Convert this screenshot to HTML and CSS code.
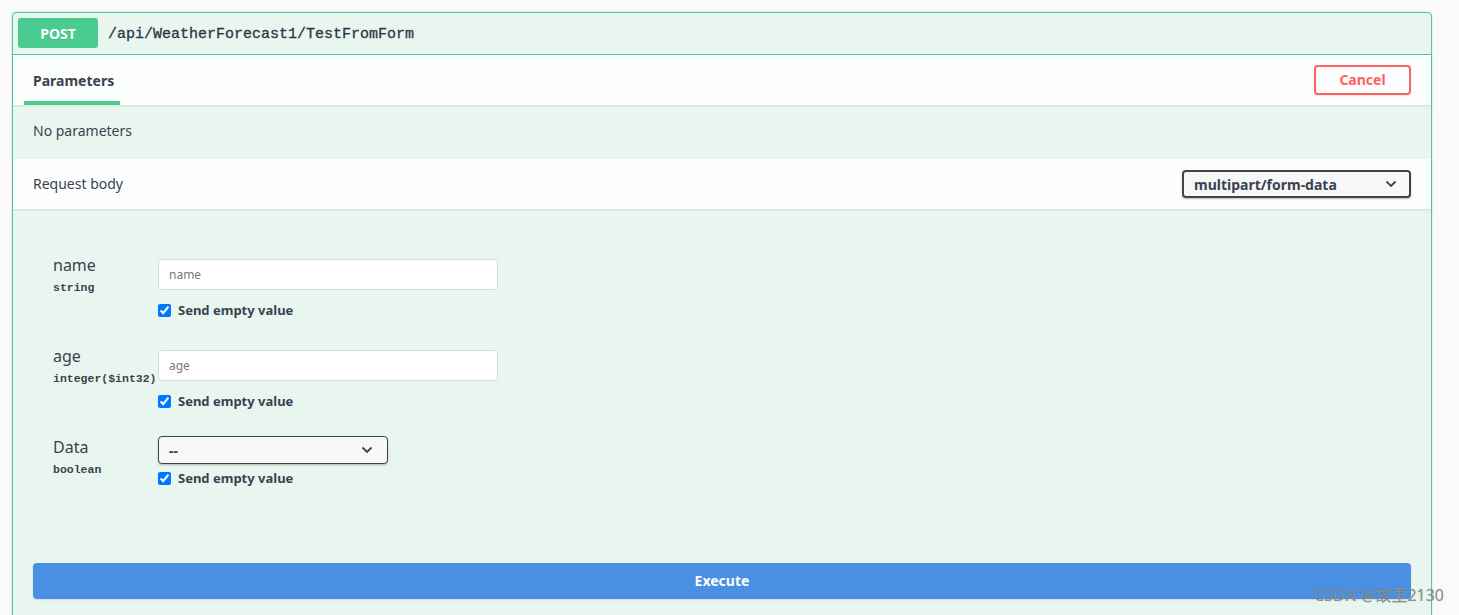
FILE: index.html
```html
<!DOCTYPE html>
<html lang="en">
<head>
<meta charset="utf-8">
<title>POST /api/WeatherForecast1/TestFromForm</title>
<link rel="stylesheet" href="styles.css">
</head>
<body>
<div class="opblock">
  <div class="summary">
    <span class="method">POST</span>
    <span class="path">/api/WeatherForecast1/TestFromForm</span>
  </div>
  <div class="tab-header">
    <div class="tab-item"><h4 class="tab-title">Parameters</h4></div>
    <button class="btn-cancel">Cancel</button>
  </div>
  <div class="no-params">No parameters</div>
  <div class="section-header">
    <span class="section-title">Request body</span>
    <div class="ctype-select">
      <span>multipart/form-data</span>
      <svg class="chev" width="12" height="8" viewBox="0 0 12 8"><polyline points="1.5,1.5 6,6 10.5,1.5" fill="none" stroke="#3b4151" stroke-width="1.8"/></svg>
    </div>
  </div>
  <div class="params">
    <div class="param-row">
      <div class="param-name">
        <div class="pname">name</div>
        <div class="ptype">string</div>
      </div>
      <div class="param-ctrl">
        <div class="text-input">name</div>
        <label class="empty-check"><input type="checkbox" checked>Send empty value</label>
      </div>
    </div>
    <div class="param-row">
      <div class="param-name">
        <div class="pname">age</div>
        <div class="ptype">integer($int32)</div>
      </div>
      <div class="param-ctrl">
        <div class="text-input">age</div>
        <label class="empty-check"><input type="checkbox" checked>Send empty value</label>
      </div>
    </div>
    <div class="param-row">
      <div class="param-name">
        <div class="pname">Data</div>
        <div class="ptype">boolean</div>
      </div>
      <div class="param-ctrl">
        <div class="bool-select">
          <span>--</span>
          <svg class="chev" width="12" height="8" viewBox="0 0 12 8"><polyline points="1.5,1.5 6,6 10.5,1.5" fill="none" stroke="#3b4151" stroke-width="1.8"/></svg>
        </div>
        <label class="empty-check tight"><input type="checkbox" checked>Send empty value</label>
      </div>
    </div>
  </div>
  <div class="execute-wrap">
    <button class="btn-execute">Execute</button>
  </div>
</div>
<div class="watermark">CSDN @故里2130</div>
</body>
</html>
```

FILE: styles.css
```css
html, body {
  margin: 0;
  height: 100%;
}
body {
  background: #fafafa;
  padding: 12px 0 0 12px;
  box-sizing: border-box;
  overflow: hidden;
  font-family: "Noto Sans", "Noto Sans CJK SC", sans-serif;
  color: #3b4151;
}
.opblock {
  width: 1420px;
  height: 640px;
  box-sizing: border-box;
  border: 1px solid #49cc90;
  border-radius: 4px;
  background: #e8f6ef;
  box-shadow: 0 0 3px rgba(0,0,0,.12);
}
.summary {
  display: flex;
  align-items: center;
  padding: 5px 5px 6px;
  border-bottom: 1px solid #49cc90;
}
.method {
  width: 80px;
  height: 30px;
  border-radius: 3px;
  background: #49cc90;
  color: #fff;
  font-weight: 700;
  font-size: 14px;
  display: flex;
  align-items: center;
  justify-content: center;
  text-shadow: 0 1px 0 rgba(0,0,0,.1);
}
.path {
  margin-left: 10px;
  margin-top: 2px;
  font-family: "Liberation Mono", monospace;
  font-size: 15px;
  color: #2f3547;
  -webkit-text-stroke: 0.3px #2f3547;
}
.tab-header {
  height: 50px;
  box-sizing: border-box;
  display: flex;
  align-items: center;
  justify-content: space-between;
  padding: 0 20px;
  background: rgba(255,255,255,.85);
  box-shadow: 0 1px 2px rgba(0,0,0,.1);
}
.tab-item {
  position: relative;
  height: 50px;
  display: flex;
  align-items: center;
}
.tab-title {
  margin: 0;
  font-size: 14px;
  font-weight: 700;
  position: relative;
}
.tab-item::after {
  content: "";
  position: absolute;
  left: -9px;
  right: -6px;
  bottom: 0;
  height: 4px;
  background: #49cc90;
}
.btn-cancel {
  width: 97px;
  height: 30px;
  border: 2px solid #ff6060;
  border-radius: 4px;
  background: transparent;
  color: #ff6060;
  font-family: inherit;
  font-size: 14px;
  font-weight: 700;
  box-shadow: 0 1px 2px rgba(0,0,0,.1);
  padding: 0 0 2px;
}
.no-params {
  height: 54px;
  box-sizing: border-box;
  display: flex;
  align-items: center;
  padding: 0 20px 4px;
  font-size: 14px;
}
.section-header {
  height: 50px;
  box-sizing: border-box;
  display: flex;
  align-items: center;
  justify-content: space-between;
  padding: 0 20px;
  background: rgba(255,255,255,.85);
  box-shadow: 0 1px 2px rgba(0,0,0,.1);
}
.section-title {
  font-size: 14px;
  margin-top: -1px;
}
.ctype-select {
  width: 229px;
  height: 28px;
  box-sizing: border-box;
  border: 2px solid #41444e;
  border-radius: 4px;
  background: #f7f7f7;
  display: flex;
  align-items: center;
  justify-content: space-between;
  padding: 0 12px 0 10px;
  font-size: 14px;
  font-weight: 700;
  box-shadow: 0 1px 2px rgba(0,0,0,.25);
}
.params {
  padding: 45px 20px 0 40px;
  display: flex;
  flex-direction: column;
  gap: 25px;
}
.param-row {
  display: flex;
}
.param-name {
  width: 105px;
  flex: none;
}
.pname {
  font-size: 16px;
  line-height: 22px;
  margin-top: 0;
}
.ptype {
  font-family: "Liberation Mono", monospace;
  font-size: 11.5px;
  font-weight: 700;
  margin-top: 5px;
}
.param-ctrl {
  display: flex;
  flex-direction: column;
}
.text-input {
  width: 340px;
  height: 31px;
  box-sizing: border-box;
  margin-top: 5px;
  border: 1px solid #d9d9d9;
  border-radius: 4px;
  background: #fff;
  padding: 0 10px 1px;
  display: flex;
  align-items: center;
  font-size: 12px;
  color: #7a7a7a;
}
.empty-check {
  margin-top: 10px;
  height: 20px;
  display: flex;
  align-items: center;
  font-size: 13px;
  font-weight: 700;
  white-space: pre;
}
.empty-check.tight {
  margin-top: 4px;
}
.empty-check input {
  margin: 0 7px 0 0;
  width: 13px;
  height: 13px;
  accent-color: #0075ff;
}
.bool-select {
  width: 230px;
  height: 28px;
  box-sizing: border-box;
  border: 1px solid #41444e;
  border-radius: 4px;
  background: #f7f7f7;
  display: flex;
  align-items: center;
  justify-content: space-between;
  padding: 0 14px 0 10px;
  font-size: 14px;
  font-weight: 700;
  box-shadow: 0 1px 2px rgba(0,0,0,.25);
}
.execute-wrap {
  padding: 75px 20px 0 20px;
}
.btn-execute {
  width: 100%;
  height: 36px;
  border: none;
  border-radius: 4px;
  background: #4990e2;
  color: #fff;
  font-family: inherit;
  font-size: 14px;
  font-weight: 700;
  box-shadow: 0 1px 2px rgba(0,0,0,.1);
  padding: 0 0 2px;
}
.watermark {
  position: fixed;
  right: 15px;
  bottom: 9px;
  font-size: 16px;
  color: #8f8f8f;
  text-shadow: 0 0 1px rgba(0,0,0,.3);
}
```
